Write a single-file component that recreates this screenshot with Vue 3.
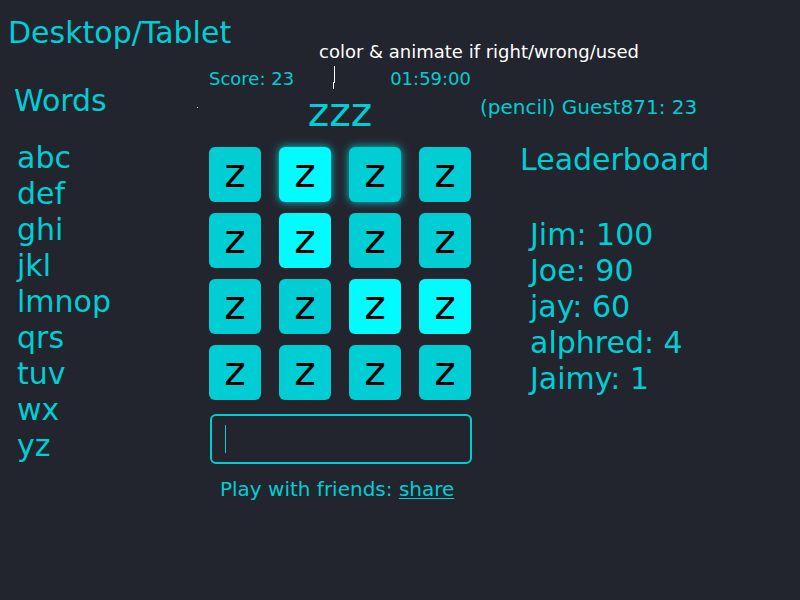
<script setup>
import { ref } from 'vue'

const words = ['abc', 'def', 'ghi', 'jkl', 'lmnop', 'qrs', 'tuv', 'wx', 'yz']

const leaders = [
  { name: 'Jim', score: 100 },
  { name: 'Joe', score: 90 },
  { name: 'jay', score: 60 },
  { name: 'alphred', score: 4 },
  { name: 'Jaimy', score: 1 },
]

const tiles = ref([
  { state: '' }, { state: 'used glow' }, { state: 'glow' }, { state: '' },
  { state: '' }, { state: 'used' }, { state: '' }, { state: '' },
  { state: '' }, { state: '' }, { state: 'used' }, { state: 'used' },
  { state: '' }, { state: '' }, { state: '' }, { state: '' },
])

const guess = ref('')
</script>

<template>
  <div class="page">
    <h1 class="title">Desktop/Tablet</h1>

    <div class="note">
      <p class="note-text">color &amp; animate if right/wrong/used</p>
      <svg class="note-line" width="4" height="24" viewBox="0 0 4 24" shape-rendering="crispEdges">
        <path d="M2 0h1v17h-1zM1 16h1v7h-1z" fill="#fff" />
      </svg>
    </div>
    <span class="speck"></span>

    <main class="columns">
      <section class="words">
        <h2>Words</h2>
        <ul>
          <li v-for="word in words" :key="word">{{ word }}</li>
        </ul>
      </section>

      <section class="game">
        <div class="status">
          <span>Score: 23</span>
          <time>01:59:00</time>
        </div>
        <p class="current">zzz</p>
        <div class="board">
          <button v-for="(tile, i) in tiles" :key="i" type="button" class="tile" :class="tile.state">z</button>
        </div>
        <div class="entry">
          <input v-model="guess" type="text" aria-label="Word" />
          <span class="caret"></span>
        </div>
        <p class="share">Play with friends: <a href="#share">share</a></p>
      </section>

      <section class="leaderboard">
        <p class="player">(pencil) Guest871: 23</p>
        <h2>Leaderboard</h2>
        <ul>
          <li v-for="leader in leaders" :key="leader.name">{{ leader.name }}: {{ leader.score }}</li>
        </ul>
      </section>
    </main>
  </div>
</template>

<style>
body {
  margin: 0;
  background: #22252e;
}
</style>

<style scoped>
.page {
  position: relative;
  box-sizing: border-box;
  min-height: 100vh;
  padding-top: 15px;
  color: #00ced4;
  font-family: "DejaVu Sans", sans-serif;
  font-size: 30px;
  line-height: 36px;
}

h1,
h2,
p,
ul {
  margin: 0;
  padding: 0;
  font-size: inherit;
  font-weight: normal;
  list-style: none;
}

.title {
  padding-left: 8px;
}

.note {
  position: absolute;
  left: 319px;
  top: 40px;
  color: #fff;
  font-size: 18px;
  line-height: 24px;
  white-space: nowrap;
}

.note-line {
  position: absolute;
  left: 13px;
  top: 26px;
}

.speck {
  position: absolute;
  left: 197px;
  top: 107px;
  width: 1px;
  height: 1px;
  background: #fff;
}

.columns {
  display: grid;
  grid-template-columns: 26fr minmax(264px, 33fr) 41fr;
  align-items: start;
  padding-top: 16px;
}

.words {
  padding: 16px 0 0 14px;
}

.words ul {
  padding: 21px 0 0 3px;
}

.status {
  display: flex;
  justify-content: space-between;
  width: 262px;
  padding-left: 1px;
  font-size: 18px;
  line-height: 24px;
}

.current {
  width: 264px;
  padding: 3px 0 17px;
  font-size: 41px;
  text-align: center;
}

.board {
  display: grid;
  grid-template-columns: repeat(4, 52px);
  grid-auto-rows: 55px;
  gap: 11px 18px;
  padding-left: 1px;
}

.tile {
  padding: 0 0 4px;
  border: 0;
  border-radius: 6px;
  background: #00ced4;
  color: #000;
  font: inherit;
  font-size: 41px;
  text-align: center;
  cursor: pointer;
}

.tile.used {
  background: #00fcff;
}

.tile.glow {
  box-shadow: 0 0 8px #00ced4;
}

.entry {
  position: relative;
  width: 262px;
  margin: 14px 0 0 2px;
}

.entry input {
  display: block;
  box-sizing: border-box;
  width: 100%;
  height: 50px;
  padding: 0 14px;
  border: 2px solid #00ced4;
  border-radius: 6px;
  outline: none;
  background: transparent;
  color: inherit;
  font: inherit;
}

.caret {
  position: absolute;
  left: 15px;
  top: 11px;
  width: 1px;
  height: 28px;
  background: #00ced4;
}

.share {
  padding: 13px 0 0 12px;
  font-size: 20px;
  line-height: 24px;
}

.share a {
  color: inherit;
  text-decoration-thickness: 1px;
  text-underline-offset: 2px;
}

.leaderboard {
  padding: 28px 0 0 8px;
}

.player {
  font-size: 20px;
  line-height: 24px;
}

.leaderboard h2 {
  padding: 23px 0 0 40px;
}

.leaderboard ul {
  padding: 39px 0 0 50px;
}
</style>
